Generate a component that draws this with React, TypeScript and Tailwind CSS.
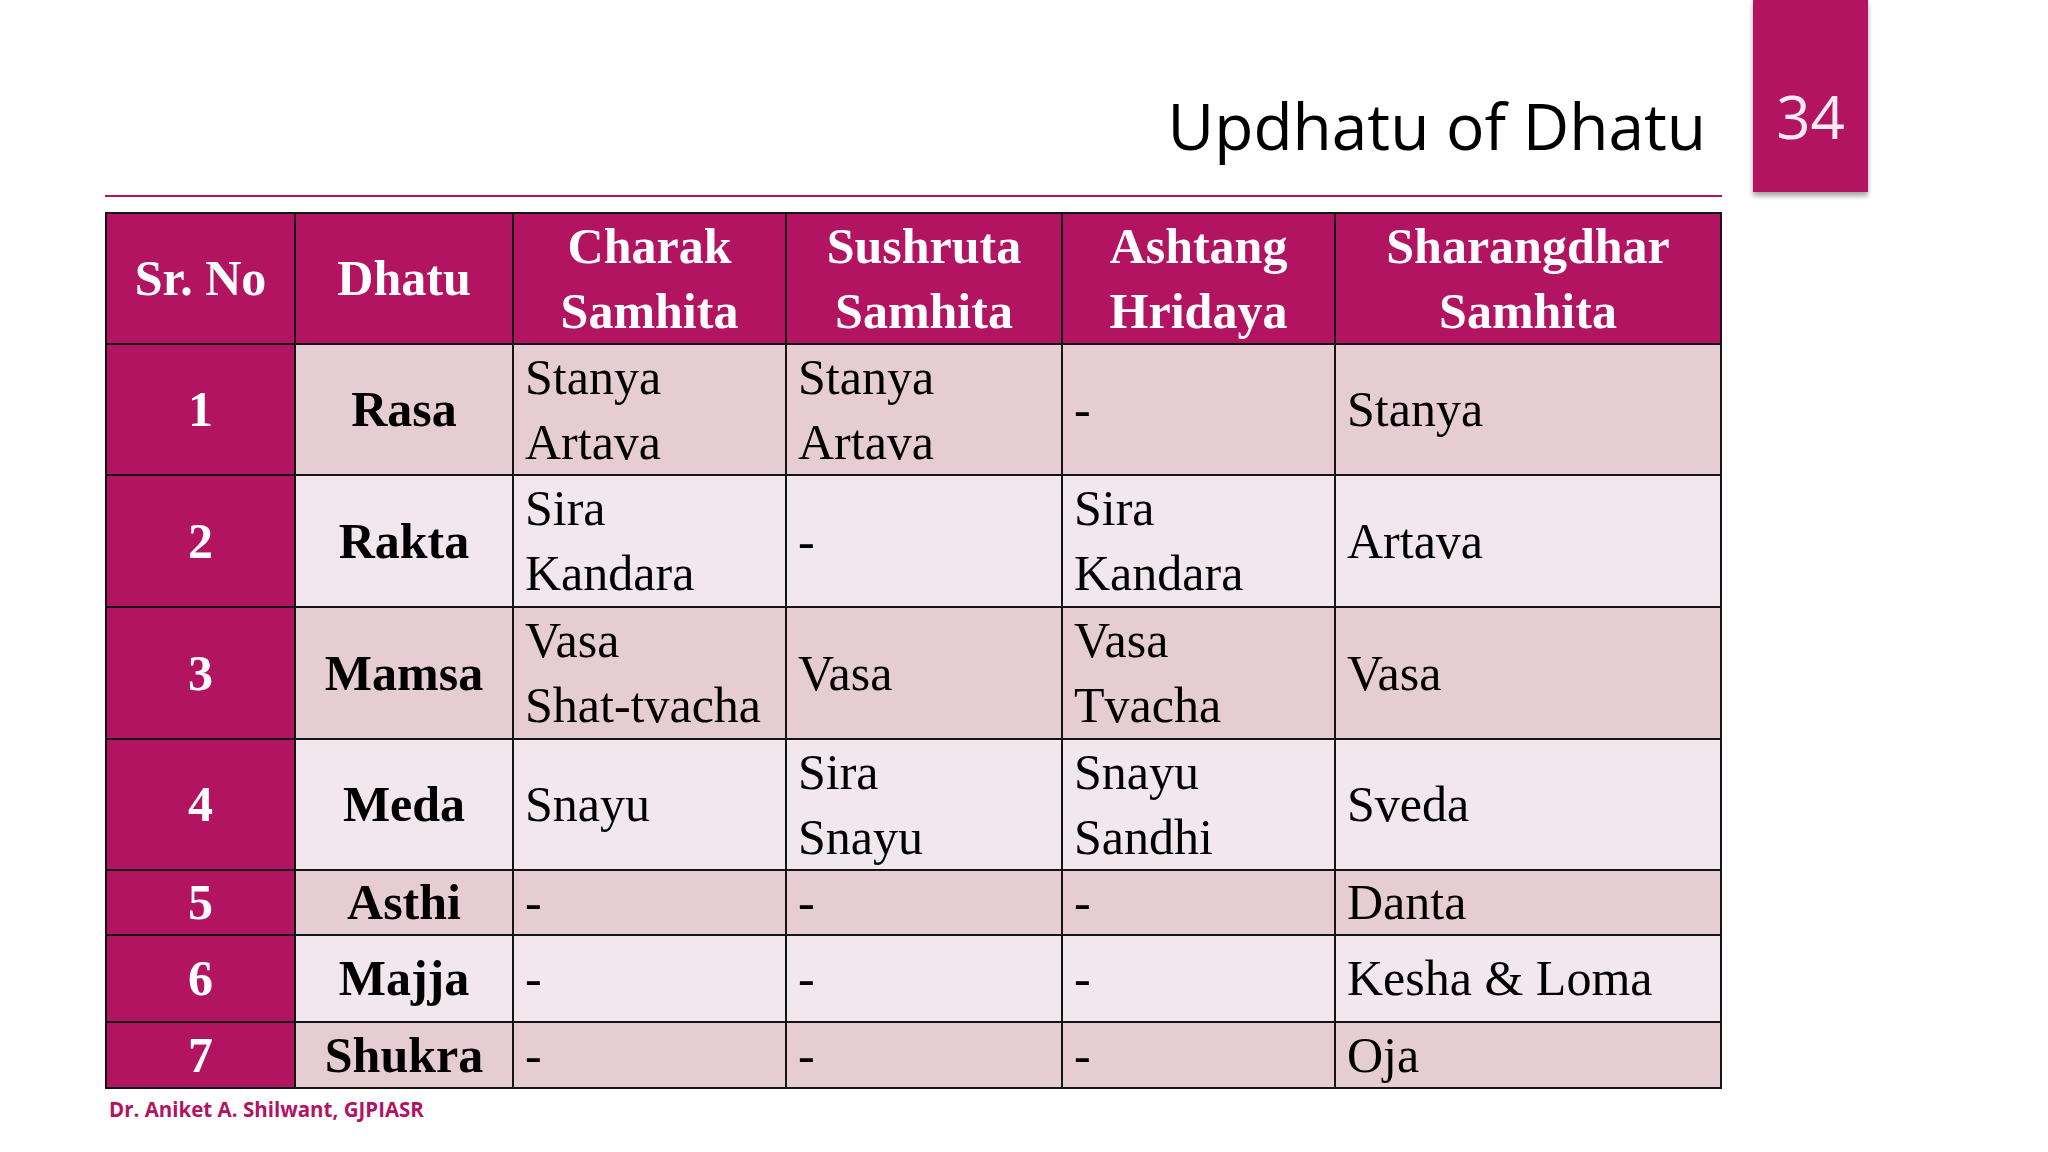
import React from "react"

const cols = "grid grid-cols-[189px_218px_273px_276px_273px_386px]"

interface Row {
  no: string
  dhatu: string
  cells: string[][]
  h: string
  bg: string
}

const odd = "bg-[#E6CDD4]"
const even = "bg-[#F2E7EC]"

// datos de la tabla
const rows: Row[] = [
  { no: "1", dhatu: "Rasa", cells: [["Stanya", "Artava"], ["Stanya", "Artava"], ["-"], ["Stanya"]], h: "grid-rows-[131px]", bg: odd },
  { no: "2", dhatu: "Rakta", cells: [["Sira", "Kandara"], ["-"], ["Sira", "Kandara"], ["Artava"]], h: "grid-rows-[132px]", bg: even },
  { no: "3", dhatu: "Mamsa", cells: [["Vasa", "Shat-tvacha"], ["Vasa"], ["Vasa", "Tvacha"], ["Vasa"]], h: "grid-rows-[132px]", bg: odd },
  { no: "4", dhatu: "Meda", cells: [["Snayu"], ["Sira", "Snayu"], ["Snayu", "Sandhi"], ["Sveda"]], h: "grid-rows-[131px]", bg: even },
  { no: "5", dhatu: "Asthi", cells: [["-"], ["-"], ["-"], ["Danta"]], h: "grid-rows-[65px]", bg: odd },
  { no: "6", dhatu: "Majja", cells: [["-"], ["-"], ["-"], ["Kesha & Loma"]], h: "grid-rows-[87px]", bg: even },
  { no: "7", dhatu: "Shukra", cells: [["-"], ["-"], ["-"], ["Oja"]], h: "grid-rows-[66px]", bg: odd },
]

const headers = [["Sr. No"], ["Dhatu"], ["Charak", "Samhita"], ["Sushruta", "Samhita"], ["Ashtang", "Hridaya"], ["Sharangdhar", "Samhita"]]

const cell = "border-r-2 border-b-2 border-[#141414] min-h-0 overflow-visible"

export default function App() {
  return (
    <div className="w-[2048px] h-[1152px] bg-white flex items-start pl-[105px] overflow-hidden">
      <div className="w-[1617px] flex flex-col">
        {/* Titulo */}
        <div
          className="mt-[94px] pr-[16px] text-right text-[64px] leading-[64px] text-black"
          style={{ fontFamily: '"Open Sans", "Noto Sans", sans-serif' }}
        >
          Updhatu of Dhatu
        </div>
        <div className="mt-[37px] h-[2px] bg-[#B31462]" />

        {/* Tabla */}
        <div
          className="mt-[15px] border-t-2 border-l-2 border-[#141414] text-[50px] leading-[65px]"
          style={{ fontFamily: '"Liberation Serif", "Times New Roman", serif' }}
        >
          <div className={`${cols} grid-rows-[131px] bg-[#B31462] text-white font-bold`}>
            {headers.map((lines, i) => (
              <div key={i} className={`${cell} flex flex-col items-center justify-center`}>
                {lines.map((l) => (
                  <span key={l} className="whitespace-nowrap">{l}</span>
                ))}
              </div>
            ))}
          </div>
          {rows.map((r) => (
            <div key={r.no} className={`${cols} ${r.h}`}>
              <div className={`${cell} bg-[#B31462] text-white font-bold flex items-center justify-center`}>
                {r.no}
              </div>
              <div className={`${cell} ${r.bg} text-black font-bold flex items-center justify-center`}>
                {r.dhatu}
              </div>
              {r.cells.map((lines, i) => (
                <div key={i} className={`${cell} ${r.bg} text-black flex flex-col justify-center pl-[11px]`}>
                  {lines.map((l) => (
                    <span key={l} className="whitespace-nowrap">{l}</span>
                  ))}
                </div>
              ))}
            </div>
          ))}
        </div>

        {/* Pie */}
        <div
          className="mt-[10px] pl-[4px] text-[20.5px] leading-[20px] font-bold text-[#B31462]"
          style={{ fontFamily: '"Open Sans", "Noto Sans", sans-serif' }}
        >
          Dr. Aniket A. Shilwant, GJPIASR
        </div>
      </div>

      {/* Numero de diapositiva */}
      <div className="ml-[31px] w-[115px] h-[192px] bg-[#B31462] shadow-[0_4px_5px_rgba(0,0,0,0.35)] flex justify-center pt-[86px]">
        <span
          className="text-[60px] leading-[60px] text-[#FCEAF2]"
          style={{ fontFamily: '"Open Sans", "Noto Sans", sans-serif' }}
        >
          34
        </span>
      </div>
    </div>
  )
}
